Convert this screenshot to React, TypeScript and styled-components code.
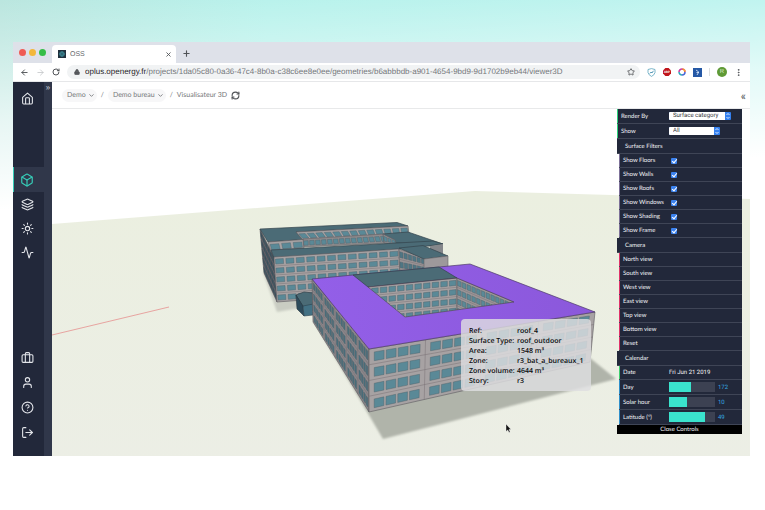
import React from "react";
import styled, { createGlobalStyle } from "styled-components";
import {
  Activity, ArrowLeft, ArrowRight, Box, ChevronDown, CircleHelp, Layers, Lock,
  LogOut, MoreVertical, Plus, RefreshCw, RotateCw, Star, Sun, User, X,
} from "lucide-react";

const GlobalStyle = createGlobalStyle`
  * { box-sizing: border-box; }
  body { margin: 0; font-family: "Liberation Sans", sans-serif; text-rendering: geometricPrecision; }
  button, input, select { font: inherit; color: inherit; margin: 0; padding: 0; border: 0; background: none; text-rendering: inherit; }
  svg { display: block; flex: none; }
`;

const Backdrop = styled.div`
  display: flex;
  min-height: 100vh;
  padding: 42px 15px 54px 13px;
  background: linear-gradient(176deg, rgba(255, 255, 255, 0) 0, rgba(255, 255, 255, 0.2) 40px, rgba(255, 255, 255, 0.65) 120px, #ffffff 210px),
    linear-gradient(90deg, #bbe6df 0, #b2f1ea 35%, #a9f0ea 100%);
`;

const BrowserWindow = styled.div`
  display: flex;
  flex: 1;
  flex-direction: column;
  min-width: 0;
  background: #ffffff;
`;

const TabStrip = styled.div`
  display: flex;
  height: 21px;
  padding-left: 6px;
  background: #dee1e9;
`;

const Lights = styled.div`
  display: flex;
  align-items: center;
  gap: 3px;
  padding-right: 6px;
`;

const Light = styled.span<{ $color: string }>`
  width: 7px;
  height: 7px;
  border-radius: 50%;
  background: ${(p) => p.$color};
`;

const Tab = styled.div`
  display: flex;
  align-items: center;
  gap: 4px;
  width: 124px;
  margin-top: 3px;
  padding: 0 4px 0 6px;
  border-radius: 4px 4px 0 0;
  background: #ffffff;
  color: #66696d;
  font-size: 7px;
`;

const TabTitle = styled.span`
  flex: 1;
`;

const IconButton = styled.button`
  display: flex;
  align-items: center;
  justify-content: center;
  min-width: 8px;
  height: 12px;
  color: #505357;
`;

const NewTab = styled(IconButton)`
  align-self: center;
  margin: 2px 0 0 6px;
`;

const Toolbar = styled.div`
  display: flex;
  align-items: center;
  gap: 7px;
  height: 19px;
  padding: 0 7px;
  border-bottom: 1px solid #e6e7e9;
`;

const Address = styled.label`
  display: flex;
  flex: 1;
  align-items: center;
  gap: 5px;
  min-width: 0;
  height: 14px;
  padding: 0 5px 0 7px;
  border-radius: 7px;
  background: #f1f3f4;
  color: #55585c;
`;

const Url = styled.span`
  flex: 1;
  overflow: hidden;
  color: #74777b;
  font-size: 8px;
  line-height: 12px;
  white-space: nowrap;
  b { color: #1f2226; font-weight: 400; }
`;

const Divider = styled.span`
  width: 1px;
  height: 8px;
  background: #dcdee0;
`;

const Avatar = styled.button`
  width: 10px;
  height: 10px;
  border-radius: 50%;
  background: #5f9a36;
  color: #d9ecc9;
  font-size: 6px;
  line-height: 10px;
`;

const AppBody = styled.div`
  display: flex;
  flex: 1;
`;

const Sidebar = styled.nav`
  display: flex;
  flex-direction: column;
  width: 39px;
  border-right: 8px solid #30374a;
  background: #22283a;
`;

const SidebarTop = styled.div`
  display: flex;
  height: 85px;
`;

const SidebarFooter = styled.div`
  display: flex;
  flex-direction: column;
  gap: 1px;
  margin-top: auto;
  padding-bottom: 12px;
`;

const SideItem = styled.button<{ $active?: boolean }>`
  display: flex;
  flex: none;
  align-items: center;
  justify-content: center;
  width: 31px;
  height: ${(p) => (p.$active ? 25 : 24)}px;
  padding-right: 3px;
  box-shadow: ${(p) => (p.$active ? "inset 1px 0 #36cdb8" : "none")};
  background: ${(p) => (p.$active ? "#30374a" : "transparent")};
  color: ${(p) => (p.$active ? "#36cdb8" : "#e3e5ea")};
`;

const HomeItem = styled(SideItem)`
  margin-top: 4px;
`;

const Expander = styled.button`
  flex: none;
  width: 8px;
  height: 11px;
  color: #c9ccd5;
  font-size: 8px;
  line-height: 10px;
`;

const Content = styled.main`
  display: flex;
  flex: 1;
  flex-direction: column;
  min-width: 0;
`;

const Breadcrumbs = styled.div`
  display: flex;
  align-items: center;
  gap: 4px;
  height: 27px;
  padding: 0 4px 0 10px;
  border-bottom: 1px solid #e8e9ea;
  color: #76787b;
  font-family: Lato, sans-serif;
  font-size: 7px;
`;

const Crumb = styled.button`
  display: flex;
  align-items: center;
  gap: 2px;
  height: 13px;
  padding: 0 2px 0 5px;
  border-radius: 7px;
  background: #f7f7f8;
`;

const CollapsePanel = styled.button`
  margin-left: auto;
  color: #505357;
  font-size: 12px;
`;

const Viewer = styled.div`
  position: relative;
  flex: 1;
  min-height: 340px;
  overflow: hidden;
`;

const Scene = styled.svg`
  position: absolute;
  width: 100%;
  height: 100%;
`;

const InfoCard = styled.dl`
  position: absolute;
  top: 210px;
  right: 159px;
  display: grid;
  grid-template-columns: 40px auto;
  column-gap: 8px;
  width: 130px;
  margin: 0;
  padding: 8px 8px 4px;
  border-radius: 4px;
  background: rgba(222, 222, 225, 0.82);
  color: #0c0d0f;
  font-family: "Open Sans", "Noto Sans", sans-serif;
  font-size: 7px;
  font-weight: 600;
  line-height: 10px;
  white-space: nowrap;
  dt, dd { margin: 0; }
`;

const Panel = styled.form`
  position: absolute;
  top: 0;
  right: 8px;
  width: 125px;
  color: #f1f2f5;
  font-family: Lato, sans-serif;
  font-size: 6px;
`;

const Folder = styled.div`
  margin-left: 2px;
`;

const FolderTitle = styled.button`
  display: block;
  width: 100%;
  height: 15px;
  padding-left: 8px;
  border-bottom: 1px solid #3f4556;
  background: #22283a;
  text-align: left;
`;

const Row = styled.div<{ $accent: string; $tall?: boolean }>`
  display: grid;
  grid-template-columns: 46px 1fr;
  align-items: center;
  height: ${(p) => (p.$tall ? 15 : 14)}px;
  padding-left: 4px;
  border-bottom: 1px solid #3f4556;
  background: #22283a;
  box-shadow: inset 1px 0 ${(p) => p.$accent}, 0 1px #3f4556;
`;

const RootRow = styled(Row)`
  grid-template-columns: 48px 1fr;
`;

const ViewButton = styled.button<{ $accent: string }>`
  display: block;
  width: 100%;
  height: 14px;
  padding-left: 4px;
  border-bottom: 1px solid #3f4556;
  background: #22283a;
  box-shadow: inset 1px 0 ${(p) => p.$accent};
  text-align: left;
`;

const SelectBox = styled.span<{ $width: number }>`
  display: flex;
  width: ${(p) => p.$width}px;
  height: 8px;
  overflow: hidden;
  border-radius: 1px;
  background: #3480f0;
  color: #ffffff;
`;

const Select = styled.select`
  flex: 1;
  min-width: 0;
  padding-left: 4px;
  appearance: none;
  background: #ffffff;
  color: #35373b;
  font-family: Roboto, sans-serif;
  font-size: 6px;
  line-height: 8px;
`;

const Check = styled.input`
  display: grid;
  place-items: center;
  width: 6px;
  height: 6px;
  margin-left: 2px;
  appearance: none;
  border-radius: 1px;
  background: #3b82ee;
  &:checked::after {
    content: "";
    width: 2px;
    height: 4px;
    border: solid #ffffff;
    border-width: 0 1px 1px 0;
    transform: rotate(40deg);
  }
`;

const DateValue = styled.output`
  color: #f3f3f5;
  font-family: Roboto, sans-serif;
  font-size: 6px;
`;

const SliderCell = styled.span`
  display: grid;
  grid-template-columns: 46px 1fr;
  gap: 3px;
  align-items: center;
  color: #35a6e0;
  font-family: Roboto, sans-serif;
  font-size: 6px;
`;

const Slider = styled.input`
  width: 46px;
  height: 10px;
  appearance: none;
  background: #3c4152;
  &::-webkit-slider-thumb { width: 0; height: 10px; appearance: none; }
`;

const CloseControls = styled.button`
  display: block;
  width: 100%;
  height: 9px;
  background: #000000;
  text-align: center;
`;

type Pt = [number, number];
type Quad = [Pt, Pt, Pt, Pt];

const mix = (a: Pt, b: Pt, t: number): Pt => [a[0] + (b[0] - a[0]) * t, a[1] + (b[1] - a[1]) * t];
const at = (q: Quad, u: number, v: number): Pt => mix(mix(q[0], q[1], u), mix(q[3], q[2], u), v);
const path = (pts: Pt[]) => "M" + pts.map((p) => p.map((n) => n.toFixed(2)).join(" ")).join("L") + "Z";

/* A wall given by its corners (clockwise from top left), with a grid of windows. */
function Facade({ quad, rows, cols, wall = "#a7a2a3", glass = "#5a8997", group = 0, fill = 0.76 }: {
  quad: Quad; rows: number; cols: number; wall?: string; glass?: string; group?: number; fill?: number;
}) {
  const panes: string[] = [];
  const lines: string[] = [];
  const m = (1 - fill) / 2;
  const pad = group ? 0.35 : 0;
  const span = group ? cols + (cols / group) * 2 * pad : cols;
  for (let r = 0; r < rows; r++) {
    if (r) lines.push(`M${at(quad, 0, r / rows)}L${at(quad, 1, r / rows)}`);
    for (let c = 0; c < cols; c++) {
      const start = group ? c + pad + Math.floor(c / group) * 2 * pad : c;
      const u0 = (start + m) / span;
      const u1 = (start + 1 - m) / span;
      const v0 = (r + 0.24) / rows;
      const v1 = (r + 0.8) / rows;
      panes.push(path([at(quad, u0, v0), at(quad, u1, v0), at(quad, u1, v1), at(quad, u0, v1)]));
    }
  }
  if (group) {
    for (let g = 1; g < cols / group; g++) {
      const t = g / (cols / group);
      lines.push(`M${at(quad, t, 0)}L${at(quad, t, 1)}`);
    }
  }
  return (
    <g>
      <path d={path(quad)} fill={wall} stroke="#5d5a5f" strokeWidth="0.6" />
      <path d={lines.join("")} stroke="#787174" strokeWidth="0.5" fill="none" />
      <path d={panes.join("")} fill={glass} stroke="#4d5d65" strokeWidth="0.4" />
    </g>
  );
}

const roof = { fill: "#4b6b76", stroke: "#34434c", strokeWidth: 0.7 };

function BuildingScene() {
  return (
    <Scene viewBox="52 109 698 347" preserveAspectRatio="xMidYMid slice" role="img" aria-label="Demo bureau">
      <defs>
        <linearGradient id="ground" x1="0" y1="0" x2="0" y2="1">
          <stop offset="0" stopColor="#ebefe0" />
          <stop offset="1" stopColor="#eceee6" />
        </linearGradient>
        <linearGradient id="purple" x1="0" y1="0" x2="1" y2="0">
          <stop offset="0" stopColor="#935fe8" />
          <stop offset="1" stopColor="#8b58db" />
        </linearGradient>
        <filter id="soft"><feGaussianBlur stdDeviation="1.2" /></filter>
        <clipPath id="court"><path d="M368 287L457 278L514 302L405 317Z" /></clipPath>
      </defs>
      <path d="M0 109H800V456H0Z" fill="#fff" />
      <path d="M0 228L52 224L475 191L750 199L800 201V500H0Z" fill="url(#ground)" />
      <path d="M52 335L169 307" stroke="#e79b98" strokeWidth="0.9" />

      <path d="M263 272L277 312L306 307L300 296Z" fill="#c9ccc2" filter="url(#soft)" />
      <path d="M313 320L383 439L616 379L590 358L369 408Z" fill="#b0b4aa" filter="url(#soft)" />

      <Facade quad={[[260, 229], [274, 257], [277, 302], [264, 273]]} rows={5} cols={6} wall="#55535c" glass="#364e5a" />
      <path d="M260 229L397 222.500L408 226L296 232L303 239.500L268 242Z" {...roof} />
      <Facade quad={[[296, 232], [408, 226], [409, 234], [303, 240]]} rows={1} cols={13} />
      <Facade quad={[[303, 239], [385, 234], [388, 243], [303, 247]]} rows={1} cols={14} wall="#8f8c8e" />
      <Facade quad={[[268, 242], [303, 239.5], [304, 249], [271, 252]]} rows={1} cols={3} />
      <path d="M383 234L408 232L443 244L430 246L400 243L389 243Z" {...roof} />
      <Facade quad={[[383, 234], [395, 240], [396, 244], [384, 243]]} rows={1} cols={3} wall="#918e90" />
      <path d="M271 250L433 241L443 244L412 248L274 258Z" {...roof} />
      <Facade quad={[[274, 257], [399, 249], [400, 293], [277, 302]]} rows={5} cols={12} />
      <Facade quad={[[399, 249], [425, 258], [426, 281], [400, 280]]} rows={3} cols={6} wall="#999395" glass="#4f7684" />
      <path d="M430 246L443 244V254L430 251Z" fill="#85878b" />
      <path d="M399 248L423 245.500L448 256L424 259Z" {...roof} />
      <path d="M424 259L448 256V268L424 272Z" fill="#9d999b" stroke="#65646a" strokeWidth="0.6" />

      <path d="M296 295L304 292L313 293V305L303 307Z" {...roof} />
      <path d="M296 295L303 306L304 316L297 309Z" fill="#2d4b5b" stroke="#263640" strokeWidth="0.6" />
      <path d="M303 306L313 304V315L304 316Z" fill="#437184" stroke="#2b414d" strokeWidth="0.6" />

      <Facade quad={[[312, 279], [369, 349], [369, 412], [313, 322]]} rows={4} cols={20} wall="#8a868a" glass="#48707e" group={4} fill={0.66} />
      <Facade quad={[[369, 349], [595, 312], [590, 362], [369, 412]]} rows={4} cols={16} group={4} fill={0.82} />
      <path d="M312 279L353 275L439 267L470 264L595 312L369 349Z" fill="url(#purple)" stroke="#4d3c66" strokeWidth="0.7" />
      <path d="M353 275L439 267L457 278L368 287Z" {...roof} />
      <g clipPath="url(#court)">
        <Facade quad={[[362, 287], [457, 278], [457, 315], [362, 325]]} rows={4} cols={11} />
        <Facade quad={[[457, 278], [514, 302], [514, 342], [457, 315]]} rows={4} cols={12} wall="#9c9698" />
      </g>
      <path d="M368 287L457 278L514 302L405 317Z" fill="none" stroke="#49414f" strokeWidth="0.6" />
      <path d="M506 424V431.500L507.800 430L509 432.500L510.200 432L509 429.500H511Z" fill="#111" stroke="#fff" strokeWidth="0.4" />
    </Scene>
  );
}

const filters = ["Floors", "Walls", "Roofs", "Windows", "Shading", "Frame"];
const views = ["North view", "South view", "West view", "East view", "Top view", "Bottom view", "Reset"];
const sliders = [
  { label: "Day", value: 172, max: 366 },
  { label: "Solar hour", value: 10, max: 25 },
  { label: "Latitude (°)", value: 49, max: 62 },
];
const details = [
  ["Ref:", "roof_4"],
  ["Surface Type:", "roof_outdoor"],
  ["Area:", "1548 m³"],
  ["Zone:", "r3_bat_a_bureaux_1"],
  ["Zone volume:", "4644 m³"],
  ["Story:", "r3"],
];

function Dropdown({ id, value, width }: { id: string; value: string; width: number }) {
  return (
    <SelectBox $width={width}>
      <Select id={id} defaultValue={value}><option>{value}</option></Select>
      <svg width="6" height="8" viewBox="0 0 6 8" fill="none" stroke="currentColor" strokeWidth="0.8">
        <path d="M1.500 3L3 1.500L4.500 3M1.500 5L3 6.500L4.500 5" />
      </svg>
    </SelectBox>
  );
}

function ControlPanel() {
  return (
    <Panel>
      <RootRow $accent="#2bd07a" $tall><label htmlFor="render">Render By</label><Dropdown id="render" value="Surface category" width={62} /></RootRow>
      <RootRow $accent="#2bd07a" $tall><label htmlFor="show">Show</label><Dropdown id="show" value="All" width={51} /></RootRow>
      <FolderTitle type="button">Surface Filters</FolderTitle>
      <Folder>
        {filters.map((name) => (
          <Row key={name} $accent="#7d7198">
            <label htmlFor={name}>Show {name}</label>
            <Check id={name} type="checkbox" defaultChecked />
          </Row>
        ))}
      </Folder>
      <FolderTitle type="button">Camera</FolderTitle>
      <Folder>{views.map((v) => <ViewButton key={v} type="button" $accent="#e0336a">{v}</ViewButton>)}</Folder>
      <FolderTitle type="button">Calendar</FolderTitle>
      <Folder>
        <Row $accent="#3fd070"><label htmlFor="date">Date</label><DateValue id="date">Fri Jun 21 2019</DateValue></Row>
        {sliders.map((s) => (
          <Row key={s.label} $accent="#2f8fca" $tall>
            <label htmlFor={s.label}>{s.label}</label>
            <SliderCell>
              <Slider
                id={s.label} type="range" min={0} max={s.max} defaultValue={s.value}
                style={{ backgroundImage: `linear-gradient(to right, #3ae3cd ${(s.value / s.max) * 100}%, transparent 0)` }}
              />
              <span>{s.value}</span>
            </SliderCell>
          </Row>
        ))}
      </Folder>
      <CloseControls type="button">Close Controls</CloseControls>
    </Panel>
  );
}

export default function App() {
  return (
    <Backdrop>
      <GlobalStyle />
      <BrowserWindow>
        <TabStrip>
          <Lights><Light $color="#ef5b54" /><Light $color="#f3b73b" /><Light $color="#35bd46" /></Lights>
          <Tab>
            <svg width="8" height="8" viewBox="0 0 8 8">
              <path d="M0 0H8V8H0Z" fill="#20303d" />
              <path d="M2 2L4 1L6 2L7 4L6 6L4 7L2 6L1 4Z" fill="#3b8792" />
              <path d="M1 4H7M4 1V7M2 2L6 6M6 2L2 6" stroke="#28545f" strokeWidth="0.4" />
            </svg>
            <TabTitle>OSS</TabTitle>
            <IconButton aria-label="Close tab"><X size={7} strokeWidth={3} /></IconButton>
          </Tab>
          <NewTab aria-label="New tab"><Plus size={9} strokeWidth={3} /></NewTab>
        </TabStrip>
        <Toolbar>
          <IconButton aria-label="Back"><ArrowLeft size={9} strokeWidth={2.5} /></IconButton>
          <IconButton aria-label="Forward"><ArrowRight size={9} color="#bfc1c4" /></IconButton>
          <IconButton aria-label="Reload"><RotateCw size={8} strokeWidth={3} /></IconButton>
          <Address>
            <Lock size={6} fill="currentColor" strokeWidth={3} />
            <Url><b>oplus.openergy.fr</b>/projects/1da05c80-0a36-47c4-8b0a-c38c6ee8e0ee/geometries/b6abbbdb-a901-4654-9bd9-9d1702b9eb44/viewer3D</Url>
            <IconButton aria-label="Bookmark"><Star size={8} strokeWidth={2.5} /></IconButton>
          </Address>
          <IconButton aria-label="Privacy shield">
            <svg width="9" height="9" viewBox="0 0 9 9" fill="none" stroke="#5ba3bc" strokeWidth="0.8">
              <path d="M4.500 0.600L8 1.500V4.500Q7.500 7 4.500 8.400Q1.500 7 1 4.500V1.500Z" />
              <path d="M2.800 5.500L4 4L5 5L6.400 2.800" stroke="#3385aa" />
            </svg>
          </IconButton>
          <IconButton aria-label="Ad blocker">
            <svg width="8" height="8" viewBox="0 0 8 8">
              <path d="M2.400 0H5.600L8 2.400V5.600L5.600 8H2.400L0 5.600V2.400Z" fill="#c0151b" />
              <text x="4" y="5.200" fontSize="3" fontWeight="700" fill="#fff" textAnchor="middle" fontFamily="Roboto">ABP</text>
            </svg>
          </IconButton>
          <IconButton aria-label="Colour ring">
            <svg width="8" height="8" viewBox="0 0 8 8" fill="none" strokeWidth="1.500">
              <path d="M4 1A3 3 0 0 1 7 4" stroke="#e75a3f" />
              <path d="M7 4A3 3 0 0 1 4 7" stroke="#4967d8" />
              <path d="M4 7A3 3 0 0 1 1 4" stroke="#2ba7b9" />
              <path d="M1 4A3 3 0 0 1 4 1" stroke="#c43da1" />
              <path d="M5.500 1.400A3 3 0 0 1 6.800 3" stroke="#f0ad31" />
            </svg>
          </IconButton>
          <IconButton aria-label="Shortcuts">
            <svg width="9" height="9" viewBox="0 0 9 9" fill="none" stroke="#cfe0f5" strokeWidth="0.900">
              <path d="M0 0H9V9H0Z" fill="#2558a5" stroke="none" />
              <path d="M3 2L5.800 4L4 7M3.500 4.500H6" />
            </svg>
          </IconButton>
          <Divider />
          <Avatar aria-label="Account">R</Avatar>
          <IconButton aria-label="Menu"><MoreVertical size={9} strokeWidth={2.5} /></IconButton>
        </Toolbar>
        <AppBody>
          <Sidebar>
            <SidebarTop>
              <HomeItem aria-label="Home">
                <svg width="13" height="13" viewBox="0 0 24 24" fill="none" stroke="currentColor" strokeWidth="2" strokeLinejoin="round">
                  <path d="M3 10L12 2L21 10V20A2 2 0 0 1 19 22H5A2 2 0 0 1 3 20Z" />
                  <path d="M8.500 22V12A1.500 1.500 0 0 1 10 10.500H14A1.500 1.500 0 0 1 15.500 12V22" />
                </svg>
              </HomeItem>
              <Expander aria-label="Expand menu">»</Expander>
            </SidebarTop>
            <SideItem $active aria-label="Geometry"><Box size={14} /></SideItem>
            <SideItem aria-label="Layers"><Layers size={13} /></SideItem>
            <SideItem aria-label="Weather"><Sun size={13} /></SideItem>
            <SideItem aria-label="Activity"><Activity size={13} /></SideItem>
            <SidebarFooter>
              <SideItem aria-label="Projects">
                <svg width="13" height="13" viewBox="0 0 24 24" fill="none" stroke="currentColor" strokeWidth="2">
                  <rect x="2" y="7" width="20" height="14" rx="2" />
                  <path d="M16 21V5a2 2 0 0 0-2-2h-4a2 2 0 0 0-2 2v16" />
                </svg>
              </SideItem>
              <SideItem aria-label="Account"><User size={13} /></SideItem>
              <SideItem aria-label="Help"><CircleHelp size={13} /></SideItem>
              <SideItem aria-label="Log out"><LogOut size={13} /></SideItem>
            </SidebarFooter>
          </Sidebar>
          <Content>
            <Breadcrumbs>
              <Crumb>Demo <ChevronDown size={7} strokeWidth={3} /></Crumb>
              <span>/</span>
              <Crumb>Demo bureau <ChevronDown size={7} strokeWidth={3} /></Crumb>
              <span>/</span>
              <span>Visualisateur 3D</span>
              <IconButton aria-label="Refresh"><RefreshCw size={9} strokeWidth={3} /></IconButton>
              <CollapsePanel aria-label="Collapse panel">«</CollapsePanel>
            </Breadcrumbs>
            <Viewer>
              <BuildingScene />
              <InfoCard>
                {details.map(([k, v]) => <React.Fragment key={k}><dt>{k}</dt><dd>{v}</dd></React.Fragment>)}
              </InfoCard>
              <ControlPanel />
            </Viewer>
          </Content>
        </AppBody>
      </BrowserWindow>
    </Backdrop>
  );
}
